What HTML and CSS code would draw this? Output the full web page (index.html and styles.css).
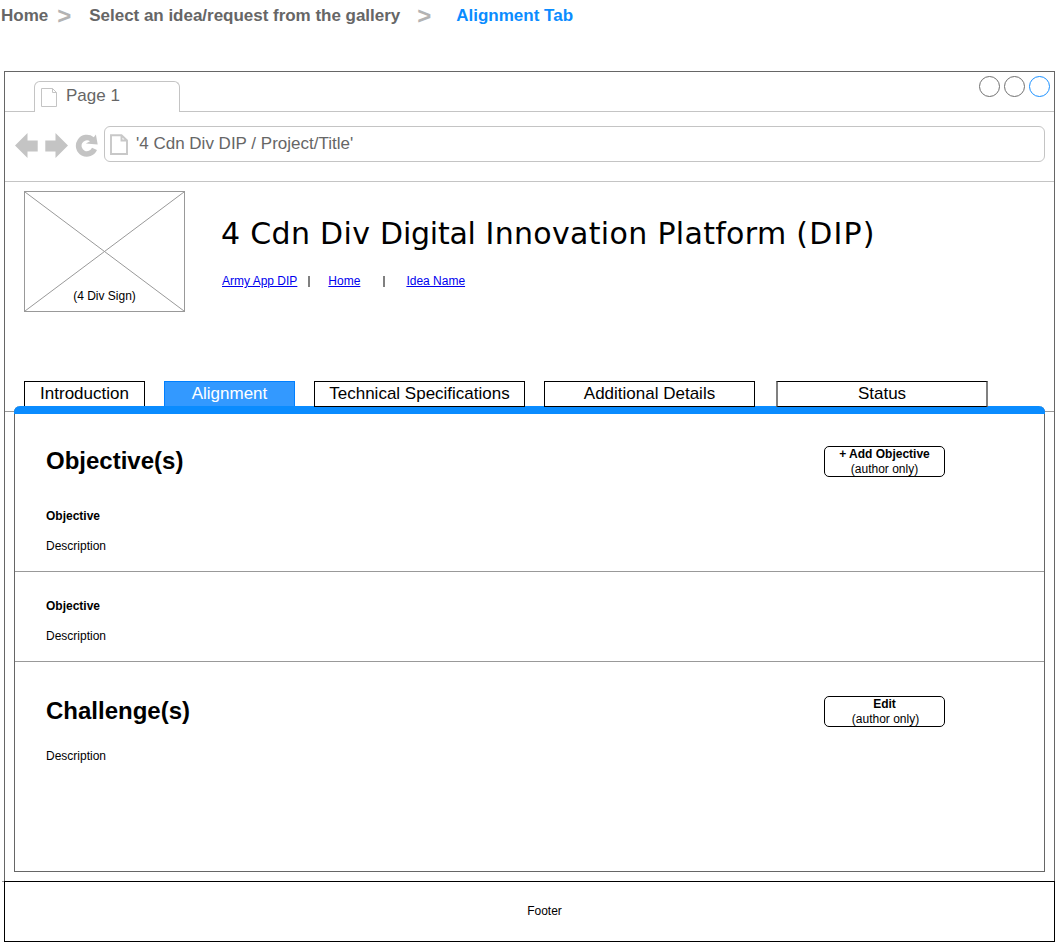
FILE: index.html
```html
<!DOCTYPE html>
<html lang="en">
<head>
<meta charset="utf-8">
<title>4 Cdn Div Digital Innovation Platform (DIP)</title>
<link rel="stylesheet" href="styles.css">
</head>
<body>
<nav class="crumbs">
  <span class="crumb">Home</span><span class="crumb-sep first">&gt;</span>
  <span class="crumb gallery">Select an idea/request from the gallery</span><span class="crumb-sep second">&gt;</span>
  <span class="crumb current">Alignment Tab</span>
</nav>
<div class="window">
  <div class="tabstrip">
    <div class="strip-lead"></div>
    <div class="page-tab">
      <svg class="tab-icon" width="17" height="20" viewBox="0 0 17 20"><path d="M.5.5H11.5L15.5 4.500V18.500H.5ZM11.500.5V4.500H15.500" fill="none" stroke="#c4c4c4"/></svg>
      <span class="page-label">Page 1</span>
    </div>
    <div class="strip-rest">
      <span class="dot"></span><span class="dot"></span><span class="dot blue"></span>
    </div>
  </div>
  <div class="toolbar">
    <svg class="nav-icons" width="84" height="26" viewBox="0 0 84 26" fill="#c4c4c4">
      <path d="M0 12.500 12.500 0V7.500H22.700V18.500H12.500V25Z"/>
      <path d="M53 12.500 40.500 0V7.500H30.300V18.500H40.500V25Z"/>
      <path d="M78.800 4.200A11 11 0 1 0 82 17L77 14.700A5.400 5.400 0 1 1 75 8.300L70.800 10.400 82.700 11.600 80.900 1.500Z"/>
    </svg>
    <div class="address">
      <svg class="doc-icon" width="18" height="21" viewBox="0 0 18 21"><path d="M1 1.200H11.500L17 6.500V20H1ZM11.500 1.200V6.500H17" fill="none" stroke="#c8c8c8" stroke-width="1.900"/></svg>
      <span class="address-text">'4 Cdn Div DIP / Project/Title'</span>
    </div>
  </div>
  <header class="masthead">
    <div class="sign">
      <svg class="sign-cross" width="159" height="119" viewBox="0 0 159 119"><path d="M0 0 159 119M159 0 0 119" stroke="#999"/></svg>
      <span class="sign-label">(4 Div Sign)</span>
    </div>
    <div class="heading">
      <h1 class="title">4 Cdn Div <span class="tight">Digital</span> Innovation Platform <span class="loose">(DIP)</span></h1>
      <div class="links">
        <a class="link" href="#">Army App DIP</a><i class="bar near"></i><a class="link" href="#">Home</a><i class="bar far"></i><a class="link" href="#">Idea Name</a>
      </div>
    </div>
  </header>
  <div class="tabs">
    <div class="tab intro">Introduction</div>
    <div class="tab active">Alignment</div>
    <div class="tab raised">Technical Specifications</div>
    <div class="tab raised">Additional Details</div>
    <div class="tab raised status">Status</div>
  </div>
  <main class="content">
    <div class="rail"></div>
    <div class="panel">
      <div class="accent"></div>
      <section class="block objectives">
        <div class="block-head">
          <h2 class="block-title">Objective(s)</h2>
          <div class="button"><b>+ Add Objective</b><span>(author only)</span></div>
        </div>
        <p class="name">Objective</p>
        <p class="desc">Description</p>
      </section>
      <section class="block second-objective">
        <p class="name">Objective</p>
        <p class="desc">Description</p>
      </section>
      <section class="block challenges">
        <div class="block-head">
          <h2 class="block-title">Challenge(s)</h2>
          <div class="button"><b>Edit</b><span class="edit-note">(author only)</span></div>
        </div>
        <p class="desc">Description</p>
      </section>
    </div>
    <div class="rail"></div>
  </main>
</div>
<div class="footer-row">
  <i class="tick"></i>
  <footer class="footer">Footer</footer>
</div>
</body>
</html>
```
FILE: styles.css
```css
* { box-sizing: border-box; }
body { margin: 0; width: 1062px; height: 950px; overflow: hidden; background: #fff; color: #000; font: 12px/15px "Liberation Sans", Arial, sans-serif; }
h1, h2, p { margin: 0; }

.crumbs { display: flex; height: 71px; padding-left: 1px; font-size: 17px; font-weight: bold; line-height: 31px; color: #666; white-space: nowrap; }
.crumb-sep { width: 14px; font-size: 24px; color: #b3b3b3; }
.gallery { letter-spacing: -0.02px; }
.first { margin: 0 18px 0 9px; }
.second { margin: 0 25px 0 17px; }
.current { color: #0a8cff; }

.window { width: 1051px; height: 810px; margin-left: 4px; border: 1px solid #666; border-bottom: 0; }
.tabstrip { display: flex; height: 40px; }
.strip-lead { width: 29px; border-bottom: 1px solid #c4c4c4; }
.page-tab { display: flex; width: 146px; height: 31px; margin-top: 9px; padding: 6px 0 0 6px; border: 1px solid #c4c4c4; border-bottom: 0; border-radius: 6px 6px 0 0; }
.page-label { margin-left: 8px; font-size: 17px; line-height: 15px; color: #666; }
.strip-rest { display: flex; flex: 1; justify-content: flex-end; gap: 4px; padding: 4px 4px 0 0; border-bottom: 1px solid #c4c4c4; }
.dot { width: 21px; height: 21px; border: 1px solid #707070; border-radius: 50%; }
.blue { border-color: #1a90ff; }

.toolbar { display: flex; height: 70px; padding: 14px 9px 0 10px; border-bottom: 1px solid #c4c4c4; }
.nav-icons { margin: 7px 5px 0 0; }
.address { display: flex; flex: 1; height: 36px; padding: 7px 0 0 5px; border: 1px solid #c4c4c4; border-radius: 6px; }
.address-text { margin-left: 8px; font-size: 17px; line-height: 20px; color: #666; }

.masthead { display: flex; height: 199px; padding: 9px 0 0 19px; }
.sign { display: grid; width: 161px; height: 121px; border: 1px solid #999; }
.sign-cross, .sign-label { grid-area: 1 / 1; }
.sign-label { align-self: end; justify-self: center; margin-bottom: 7px; }
.heading { margin-left: 36px; }
.title { margin-top: 23px; font: 30px/40px "DejaVu Sans", Verdana, sans-serif; letter-spacing: 0.32px; white-space: nowrap; }
.tight { letter-spacing: -0.25px; }
.loose { letter-spacing: 1.2px; }
.links { display: flex; margin: 20px 0 0 1px; }
.link { color: #00e; }
.bar { width: 2px; height: 11px; margin-top: 2px; background: #808080; }
.near { margin-left: 11px; margin-right: 18px; }
.far { margin-left: 23px; margin-right: 21px; }

.tabs { display: flex; height: 25px; padding-left: 19px; font-size: 17px; line-height: 24px; text-align: center; }
.tab { flex: none; width: 211px; height: 26px; margin-right: 19px; border: 1px solid #000; background: #fff; }
.intro { width: 121px; height: 25px; border-bottom: 0; }
.active { width: 131px; height: 25px; border-color: #007fff; border-bottom: 0; background: #3399ff; color: #fff; }
.raised { position: relative; z-index: 1; }
.status { width: 212px; margin-left: 2px; border-left: 2px solid #808080; border-right: 2px solid #808080; }

.content { display: flex; height: 466px; }
.rail { width: 9px; height: 6px; border-bottom: 1px solid #999; }
.panel { width: 1031px; height: 466px; border: solid #666; border-width: 0 1px 1px; border-radius: 6px 6px 0 0; }
.accent { height: 8px; margin: 0 -1px; border-radius: 6px 6px 0 0; background: #0a8cff; }
.block { padding-left: 31px; }
.objectives { height: 158px; border-bottom: 1px solid #999; padding-top: 32px; }
.second-objective { height: 90px; border-bottom: 1px solid #999; padding-top: 27px; }
.challenges { padding-top: 34px; }
.block-head { display: flex; justify-content: space-between; height: 31px; padding-right: 99px; }
.block-title { font-size: 24px; line-height: 30px; }
.button { display: flex; flex-direction: column; width: 121px; height: 31px; border: 1px solid #000; border-radius: 5px; text-align: center; }
.edit-note { padding-left: 2px; }
.objectives .name { margin-top: 32px; }
.name { font-weight: bold; }
.name + .desc { margin-top: 15px; }
.block-head + .desc { margin-top: 22px; }

.footer-row { display: flex; padding-left: 2px; }
.tick { width: 2px; height: 1px; background: #999; }
.footer { width: 1051px; height: 61px; border: 1px solid #000; text-align: center; padding-left: 30px; line-height: 59px; }
```
